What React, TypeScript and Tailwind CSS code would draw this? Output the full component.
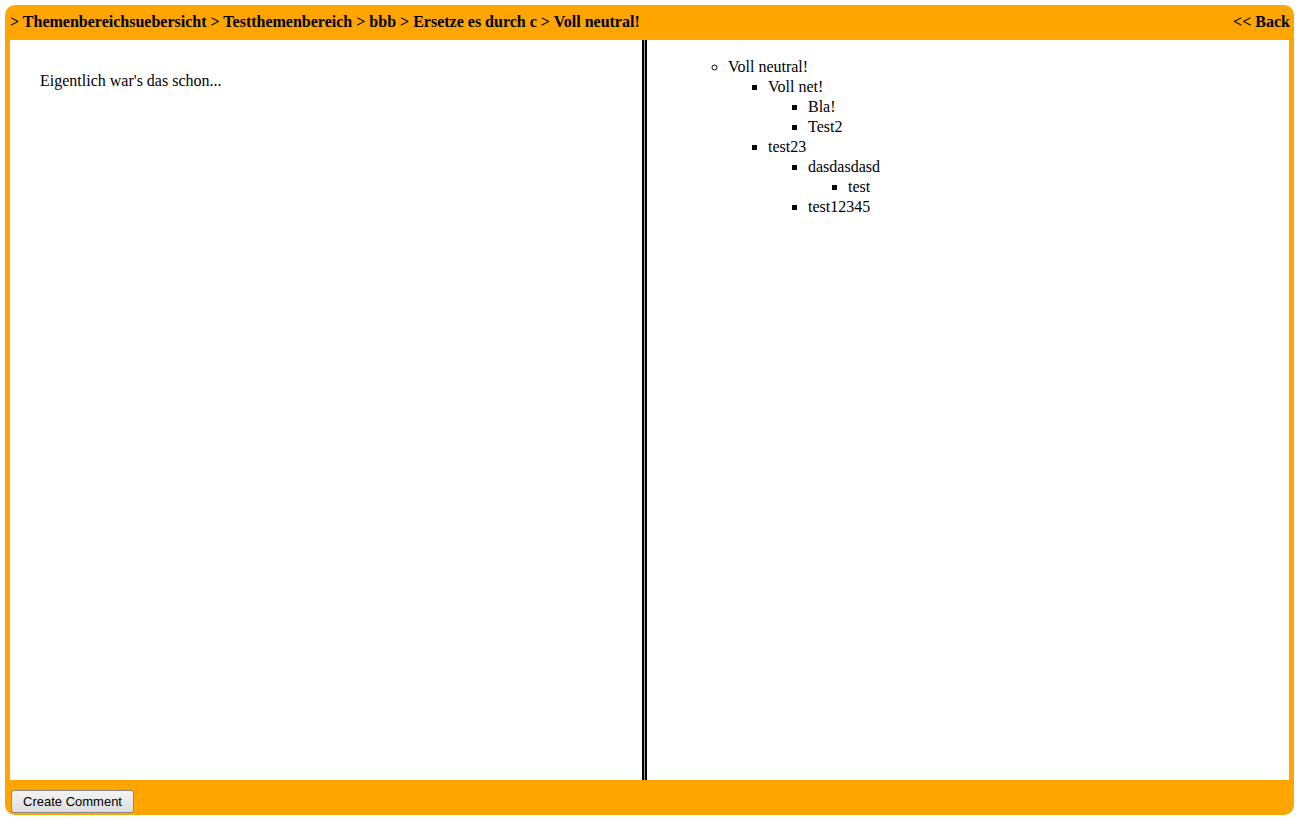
import React from 'react';

type Node = { label: string; children?: Node[] };

const tree: Node[] = [
  {
    label: 'Voll neutral!',
    children: [
      { label: 'Voll net!', children: [{ label: 'Bla!' }, { label: 'Test2' }] },
      {
        label: 'test23',
        children: [{ label: 'dasdasdasd', children: [{ label: 'test' }] }, { label: 'test12345' }],
      },
    ],
  },
];

const TreeList: React.FC<{ nodes: Node[]; depth: number }> = ({ nodes, depth }) => (
  <ul className={`pl-10 ${depth === 0 ? 'list-[circle]' : 'list-[square]'}`}>
    {nodes.map((n) => (
      <li key={n.label}>
        {n.label}
        {n.children && <TreeList nodes={n.children} depth={depth + 1} />}
      </li>
    ))}
  </ul>
);

export default function App() {
  return (
    <div className="p-[5px] bg-white" style={{ fontFamily: '"Liberation Serif", "Times New Roman", serif' }}>
      <div className="h-[810px] rounded-[10px] bg-[#ffa500] flex flex-col">
        {/* breadcrumb bar */}
        <div className="h-[35px] flex items-center justify-between pl-[5px] pr-[4px] pb-[2px] font-bold text-base text-black">
          <span>&gt; Themenbereichsuebersicht &gt; Testthemenbereich &gt; bbb &gt; Ersetze es durch c &gt; Voll neutral!</span>
          <span>&lt;&lt; Back</span>
        </div>

        {/* content */}
        <div className="mx-[5px] h-[740px] bg-white flex text-base leading-5 text-black">
          <div className="w-[632px] pt-[31px] pl-[30px]">Eigentlich war's das schon...</div>
          <div className="w-[5px] border-x-2 border-black bg-[#a0a0a0]"></div>
          <div className="flex-1 pt-[17px] pl-[41px]">
            <TreeList nodes={tree} depth={0} />
          </div>
        </div>

        {/* footer */}
        <div className="h-[35px] flex items-end pb-[2px] px-[6px]">
          <button
            className="h-[23px] px-[11px] text-[13px] text-black border border-[#8a8a8a] rounded-[3px] bg-gradient-to-b from-[#f4f4f4] to-[#dcdcdc]"
            style={{ fontFamily: '"Liberation Sans", Arial, sans-serif' }}
          >
            Create Comment
          </button>
        </div>
      </div>
    </div>
  );
}
